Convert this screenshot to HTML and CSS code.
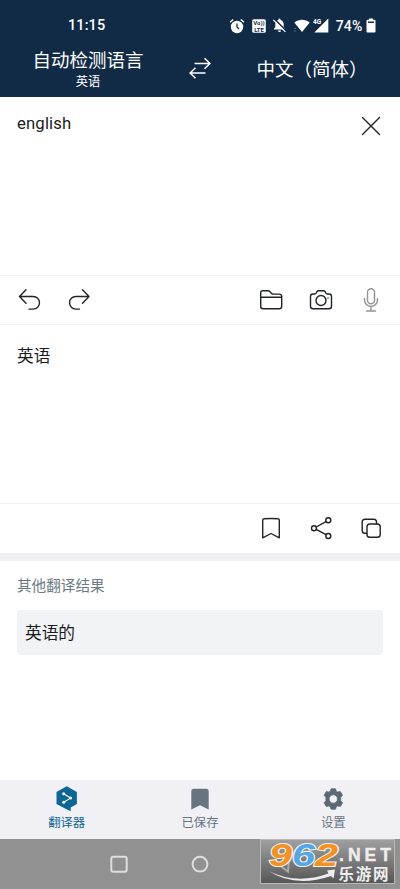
FILE: index.html
```html
<!DOCTYPE html>
<html lang="zh-CN">
<head>
<meta charset="utf-8">
<meta name="viewport" content="width=device-width, initial-scale=1">
<title>翻译器</title>
<link rel="stylesheet" href="styles.css">
</head>
<body>
<div class="app">
  <header class="top">
    <div class="status">
      <span class="clock">11:15</span>
      <div class="status-icons">
        <svg width="16" height="16" viewBox="0 0 16 16"><circle cx="8" cy="9" r="6.2" fill="#fff"/><path d="M1 4.2 4.2 1.5M15 4.2 11.800 1.500" stroke="#fff" stroke-width="1.500"/><path d="M8 5.500V9l2 2" stroke="#112b46" stroke-width="1.300" fill="none"/></svg>
        <svg width="14" height="14" viewBox="0 0 14 14"><rect x=".2" y=".2" width="13.600" height="13.600" rx="1.600" fill="#fff"/><text x="7" y="6.300" class="volte">Vo))</text><text x="7" y="12.500" class="volte">LTE</text></svg>
        <svg width="15" height="15" viewBox="0 0 15 15"><path d="M2 11.500v-1l1.300-1.300V6.500C3.300 4 4.600 2.600 6.500 2.100V1.500a1 1 0 0 1 2 0v.6c1.900.5 3.200 2 3.200 4.400v2.700l1.300 1.300v1zM6 12.400h3a1.500 1.500 0 0 1-3 0z" fill="#fff"/><path d="M2.200.8 14.600 13.200" stroke="#112b46" stroke-width="1.500"/><path d="M1.300 1.800 13.400 13.900" stroke="#fff" stroke-width="1.200"/></svg>
        <svg width="16" height="14" viewBox="0 0 16 14"><path d="M.3 3.400C5-.2 11-.2 15.700 3.400L8 13z" fill="#fff"/><path d="M1 9v1M1 11.500v1" stroke="#8291a1" stroke-width="1"/></svg>
        <svg class="signal" width="16" height="15" viewBox="0 0 16 15"><path d="M15.300.5V14.500H1.300z" fill="#fff"/><text x="0" y="5.800" class="four-g">4G</text></svg>
        <span class="percent">74%</span>
        <svg width="10" height="15" viewBox="0 0 10 15"><path d="M3 .5h4v1.300h1.400q1.100 0 1.100 1.100v10.500q0 1.100-1.100 1.100H1.600Q.5 14.500.5 13.400V2.900q0-1.100 1.100-1.100H3z" fill="#fff"/><path d="M2 4.200h6" stroke="#112b46" stroke-width="1.500"/></svg>
      </div>
    </div>
    <div class="languages">
      <div class="source"><span class="lang">自动检测语言</span><span class="detected">英语</span></div>
      <svg class="swap" width="24" height="24" viewBox="188 56 24 24"><path d="M194.500 63.500H209.500M204.500 58.200l5.400 5.300-5.400 5.300M205.500 73H190.500M195.500 67.700l-5.400 5.300 5.400 5.300"/></svg>
      <span class="lang target">中文（简体）</span>
    </div>
  </header>

  <section class="pane input">
    <span class="latin">english</span>
    <svg class="icon close" width="24" height="24" viewBox="359 114 24 24"><path d="m362.500 117.500 17 17m0-17-17 17"/></svg>
  </section>
  <div class="tools">
    <svg class="icon" width="24" height="24" viewBox="17 288 24 24"><path d="M26 289.800 19.500 296.500l6.500 6.700M20 296.500H33.200a6.300 6.300 0 0 1 0 12.600H29"/></svg>
    <svg class="icon redo" width="24" height="24" viewBox="67 288 24 24"><path d="m82.500 289.800 6.500 6.700-6.500 6.700M88.500 296.500H75.800a6.300 6.300 0 0 0 0 12.600H79.500"/></svg>
    <div class="group">
      <svg class="icon" width="24" height="24" viewBox="259 288 24 24"><path d="M260.700 297.300V292.800q0-2 2-2h5.300q1 0 1.800.8l1.800 1.800q.7.700 1.700.7h6.200q2.200 0 2.200 2.200V306.300q0 2.500-2.500 2.500H263.200q-2.500 0-2.500-2.500v-9H281.700"/></svg>
      <svg class="icon" width="24" height="24" viewBox="309 288 24 24"><path d="M313 294h1.700q1 0 1.500-1l.6-1.200q.5-1 1.700-1h5q1.200 0 1.700 1l.6 1.200q.5 1 1.500 1H329q2.500 0 2.500 2.500V306.300q0 2.500-2.500 2.500H313q-2.500 0-2.500-2.500V296.500q0-2.500 2.500-2.500z"/><circle cx="321" cy="300.500" r="5"/><path d="M328 297.600v.8" stroke-width="1"/></svg>
      <svg class="icon mic" width="24" height="24" viewBox="359 288 24 24"><rect x="367.500" y="288.700" width="7" height="15" rx="3.500"/><path d="M364.500 298.500v1.500a6.500 6.500 0 0 0 13 0v-1.500M371 306.700V311M366.500 311h9"/></svg>
    </div>
  </div>
  <section class="pane output">英语</section>
  <div class="tools output-tools">
    <div class="group">
      <svg class="icon" width="24" height="24" viewBox="259 516 24 24"><path d="M262.700 537.800V520.300q0-1.500 1.500-1.500 6.800-.7 13.600 0 1.500 0 1.500 1.500V537.800l-8.300-4.300z"/></svg>
      <svg class="icon" width="24" height="24" viewBox="309 516 24 24"><path d="m316.200 527 9.800-5.300M316.200 529.400l9.800 5.300"/><circle cx="314" cy="528.200" r="2.500"/><circle cx="328.300" cy="520.300" r="2.500"/><circle cx="328.300" cy="536" r="2.500"/></svg>
      <svg class="icon" width="24" height="24" viewBox="359 516 24 24"><path d="M366.700 533.200H365q-2.800 0-2.800-2.800V522q0-2.800 2.800-2.800h8.700q2.800 0 2.800 2.800v1.700"/><rect x="367" y="524" width="13.200" height="13.200" rx="2.800"/></svg>
    </div>
  </div>
  <section class="alternatives">
    <h2>其他翻译结果</h2>
    <div class="alternative">英语的</div>
  </section>

  <nav class="tabs">
    <div class="tab active"><svg width="24" height="26" viewBox="55 785 24 26"><path d="M66.700 786.300 76.900 792V804l-6.200 3.600v3.700l-4.200-2.100L56.500 804V792z" fill="#0d6594"/><path d="m63.700 793.800 6.800 4.300-6.800 4.200" stroke="#fff" stroke-width="1.100" fill="none"/><g fill="#fff"><circle cx="63.700" cy="793.800" r="1.500"/><circle cx="70.500" cy="798.100" r="1.500"/><circle cx="63.700" cy="802.300" r="1.500"/></g></svg><span>翻译器</span></div>
    <div class="tab"><svg width="24" height="26" viewBox="188 785 24 26"><path d="M191.300 809.500V791.500q0-2.700 2.700-2.700h12q2.700 0 2.700 2.700V809.500l-8.700-4.200z" fill="#68747f"/></svg><span>已保存</span></div>
    <div class="tab"><svg width="24" height="26" viewBox="321 785 24 26"><path fill-rule="evenodd" stroke="#5b6976" stroke-width=".8" stroke-linejoin="round" fill="#5b6976" d="m330.300 791.300.8-2.500h4.400l.8 2.500 1.400.8 2.600-.6 2.200 3.800-1.800 1.900v3.600l1.800 1.900-2.200 3.800-2.600-.6-1.400.8-.8 2.500h-4.400l-.8-2.500-1.400-.8-2.600.6-2.200-3.800 1.800-1.900v-3.600l-1.800-1.900 2.200-3.800 2.600.6zM333.300 794.800a4.200 4.200 0 1 0 0 8.400 4.200 4.200 0 0 0 0-8.400z"/></svg><span>设置</span></div>
  </nav>
  <div class="system">
    <svg width="200" height="22" viewBox="100 853 200 22"><g fill="none" stroke="#dedede" stroke-width="2"><rect x="111.300" y="856.700" width="15.400" height="15" rx="2"/><circle cx="200" cy="864.200" r="7.400"/></g></svg>
    <svg class="badge" width="135" height="45" viewBox="260 839 135 45">
      <defs><linearGradient id="shade" x1="0" y1="0" x2="0" y2="1"><stop offset="0" stop-color="#a0a0a0"/><stop offset="1" stop-color="#565656"/></linearGradient></defs>
      <rect x="260.500" y="839.500" width="134" height="44" fill="url(#shade)" stroke="#b9b9b9"/>
      <path d="m289 859-9 6.500 8 6z" fill="none" stroke="#aaa" stroke-width="2"/>
      <path d="M268.500 871q28 14 60 2.500l-1.500-3 8-1-1.500 9-2.500-2.500q-36 12-62.500-5z" fill="#eee"/>
      <g class="digits"><text x="269" y="865.500" textLength="23" lengthAdjust="spacingAndGlyphs" fill="#f39122">9</text><text x="292" y="865.500" textLength="23" lengthAdjust="spacingAndGlyphs" fill="#55a7e2">6</text><text x="315" y="865.500" textLength="23" lengthAdjust="spacingAndGlyphs" fill="#f39122">2</text></g>
      <text x="339" y="861" class="domain" textLength="52">.NET</text>
      <text x="338.500" y="880" class="site" textLength="50">乐游网</text>
    </svg>
  </div>
</div>
</body>
</html>
```
FILE: styles.css
```css
* { box-sizing: border-box; }
body { margin: 0; background: #fff; color: #1b1c20; font-family: Roboto, "Noto Sans CJK SC", sans-serif; }
svg { display: block; flex: none; }
.app { width: 400px; height: 889px; display: flex; flex-direction: column; overflow: hidden; }
.top { height: 97px; background: #112b46; color: #fff; flex: none; }
.status { height: 48px; padding: 3px 24px 0 68px; display: flex; align-items: center; justify-content: space-between; }
.clock { font-size: 14.5px; font-weight: 500; letter-spacing: .1px; }
.status-icons { display: flex; align-items: center; gap: 6.5px; }
.status-icons .signal { margin-left: -3px; }
.percent { font-size: 14px; font-weight: 500; line-height: 16px; margin-right: -3px; letter-spacing: .2px; }
.volte { font: 700 6px Roboto, sans-serif; fill: #112b46; text-anchor: middle; }
.four-g { font: 700 6.5px Roboto, sans-serif; fill: #fff; }
.languages { height: 49px; padding-top: 1px; display: grid; grid-template-columns: 176px 48px 176px; align-items: start; justify-items: center; }
.source { display: flex; flex-direction: column; align-items: center; }
.lang { font-size: 18.5px; line-height: 24px; }
.detected { font-size: 12.3px; line-height: 18px; }
.swap { margin-top: 7px; fill: none; stroke: #fff; stroke-width: 1.5; }
.target { margin-top: 9px; }
.pane { flex: none; padding: 15px 17px; height: 178px; display: flex; justify-content: space-between; font-size: 16.7px; line-height: 24px; }
.latin { letter-spacing: .15px; }
.close { margin-top: 2px; }
.tools { flex: none; height: 50px; border: solid #f0f0f2; border-width: 1px 0; display: flex; align-items: center; padding: 0 17px; }
.redo { margin-left: 26px; }
.group { display: flex; gap: 26px; margin-left: auto; }
.icon { fill: none; stroke: #202329; stroke-width: 1.4; stroke-linecap: round; stroke-linejoin: round; }
.mic { stroke: #929292; }
.output { padding-top: 20px; }
.output-tools { border-bottom: 0; padding-bottom: 1px; }
.alternatives { flex: none; height: 227px; border-top: 8px solid #f0eff4; padding: 15px 17px; }
.alternatives h2 { margin: 0 0 14px; font-size: 14.6px; line-height: 20px; font-weight: 400; color: #6d7a83; }
.alternative { height: 45px; padding: 1px 8px 0; background: #f2f3f7; border-radius: 4px; font-size: 16.7px; line-height: 46px; }
.tabs { flex: none; height: 59px; background: #f0f0f5; display: grid; grid-template-columns: repeat(3, 1fr); padding-top: 5px; font-size: 12.3px; line-height: 18px; color: #68747f; }
.tab { display: flex; flex-direction: column; align-items: center; gap: 3px; }
.active { color: #0d6594; }
.system { position: relative; flex: none; height: 50px; background: #919192; padding: 14px 100px; }
.badge { position: absolute; left: 260px; top: 0; overflow: visible; }
.digits { font: italic 700 31px "Liberation Sans", sans-serif; stroke: #f3f3f3; stroke-width: 2px; paint-order: stroke; }
.domain { font: 700 17.5px "Liberation Sans", sans-serif; fill: #eee; stroke: #eee; stroke-width: .4px; }
.site { font: 700 15.5px "Noto Sans CJK SC", sans-serif; fill: #eee; }
```
